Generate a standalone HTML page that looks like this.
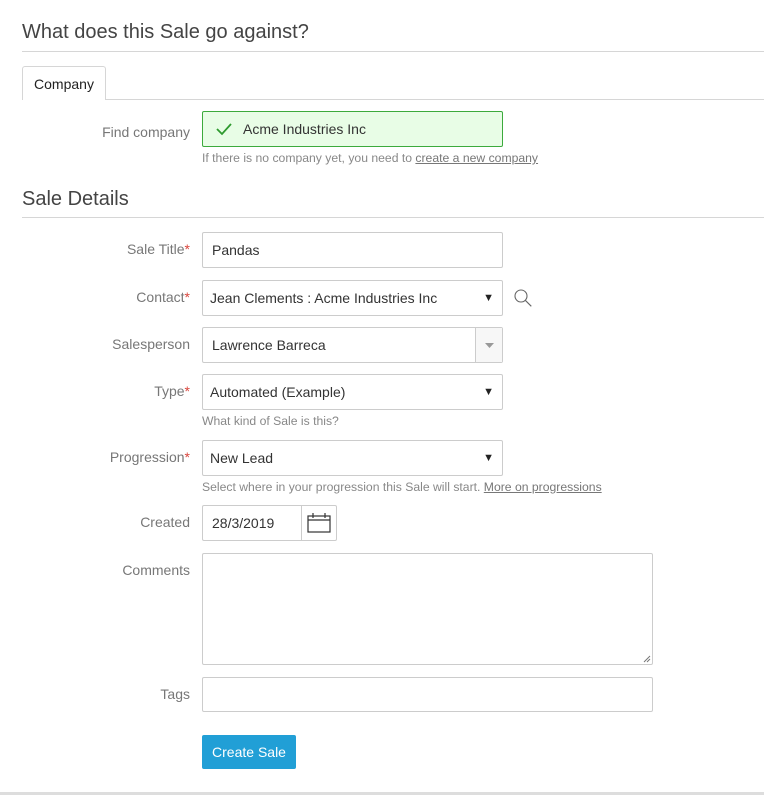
<!DOCTYPE html>
<html><head><meta charset="utf-8"><style>
*{box-sizing:border-box;margin:0;padding:0}
body{width:764px;height:795px;background:#fff;font-family:"Liberation Sans",Arial,sans-serif;position:relative;overflow:hidden;color:#333}
.a{position:absolute}
.h{font-size:20px;color:#444;left:22px}
.ln{height:1px;background:#d6d6d6;left:22px;right:0}
.lb{right:574px;font-size:14px;color:#777;text-align:right;white-space:nowrap}
.lb i{color:#d9453c;font-style:normal}
.in{left:202px;width:301px;height:36px;border:1px solid #ccc;border-radius:2px;font-size:14px;color:#333;padding:0 0 0 9px;line-height:34px;background:#fff}
.ar{position:absolute;right:8px;top:0;font-size:11px;color:#222}
.hp{left:202px;font-size:12.2px;color:#888;white-space:nowrap}
.hp u{color:#777}
</style></head><body>
<div class="a h" style="top:21px">What does this Sale go against?</div>
<div class="a ln" style="top:51px"></div>
<div class="a ln" style="top:99px"></div>
<div class="a" style="left:22px;top:66px;width:84px;height:34px;border:1px solid #d6d6d6;border-bottom:none;border-radius:3px 3px 0 0;background:#fff;font-size:14px;color:#222;text-align:center;line-height:34px">Company</div>
<div class="a lb" style="top:124px">Find company</div>
<div class="a" style="left:202px;top:111px;width:301px;height:36px;border:1px solid #3caa3c;border-radius:2px;background:#e8fde6;font-size:14px;color:#333;line-height:34px;padding-left:40px">Acme Industries Inc
<svg class="a" style="left:12px;top:10px" width="18" height="14" viewBox="0 0 18 14"><path d="M2 7l5 5L16 2" fill="none" stroke="#2e9a2e" stroke-width="1.8"/></svg></div>
<div class="a hp" style="top:151px">If there is no company yet, you need to <u>create a new company</u></div>
<div class="a h" style="top:188px">Sale Details</div>
<div class="a ln" style="top:217px"></div>

<div class="a lb" style="top:241px">Sale Title<i>*</i></div>
<div class="a in" style="top:232px">Pandas</div>

<div class="a lb" style="top:289px">Contact<i>*</i></div>
<div class="a in" style="top:280px;padding-left:7px">Jean Clements : Acme Industries Inc<span class="ar">▼</span></div>
<svg class="a" style="left:513px;top:288px" width="20" height="20" viewBox="0 0 20 20"><circle cx="8" cy="8" r="6" fill="none" stroke="#666" stroke-width="1.1"/><path d="M12.3 12.3l6 6" stroke="#666" stroke-width="1.1"/></svg>

<div class="a lb" style="top:336px">Salesperson</div>
<div class="a in" style="top:327px">Lawrence Barreca<div class="a" style="right:0;top:0;width:27px;height:34px;border-left:1px solid #ccc;background:#f7f7f7"><svg class="a" style="left:9px;top:15px" width="9" height="5"><path d="M0 0h9L4.5 5z" fill="#999"/></svg></div></div>

<div class="a lb" style="top:383px">Type<i>*</i></div>
<div class="a in" style="top:374px;padding-left:7px">Automated (Example)<span class="ar">▼</span></div>
<div class="a hp" style="top:414px">What kind of Sale is this?</div>

<div class="a lb" style="top:449px">Progression<i>*</i></div>
<div class="a in" style="top:440px;padding-left:7px">New Lead<span class="ar">▼</span></div>
<div class="a hp" style="top:480px">Select where in your progression this Sale will start. <u>More on progressions</u></div>

<div class="a lb" style="top:514px">Created</div>
<div class="a in" style="top:505px;width:135px">28/3/2019<div class="a" style="left:98px;top:0;width:1px;height:34px;background:#ccc"></div>
<svg class="a" style="left:104px;top:7px" width="24" height="20" viewBox="0 0 24 20"><rect x="1" y="3" width="22" height="16" fill="none" stroke="#333" stroke-width="1.2"/><path d="M1 7h22M6 0v5M18 0v5" stroke="#333" stroke-width="1.2"/></svg></div>

<div class="a lb" style="top:562px">Comments</div>
<div class="a" style="left:202px;top:553px;width:451px;height:112px;border:1px solid #ccc;border-radius:2px"><svg class="a" style="right:1px;bottom:1px" width="8" height="8"><path d="M1 7l6-6M4 7l3-3" stroke="#777" stroke-width="1"/></svg></div>

<div class="a lb" style="top:686px">Tags</div>
<div class="a" style="left:202px;top:677px;width:451px;height:35px;border:1px solid #ccc;border-radius:2px"></div>

<div class="a" style="left:202px;top:735px;width:94px;height:34px;background:#219fd6;border-radius:2px;color:#fff;font-size:14px;text-align:center;line-height:34px">Create Sale</div>
<div class="a" style="left:0;right:0;top:792px;height:3px;background:#ddd"></div>
</body></html>
